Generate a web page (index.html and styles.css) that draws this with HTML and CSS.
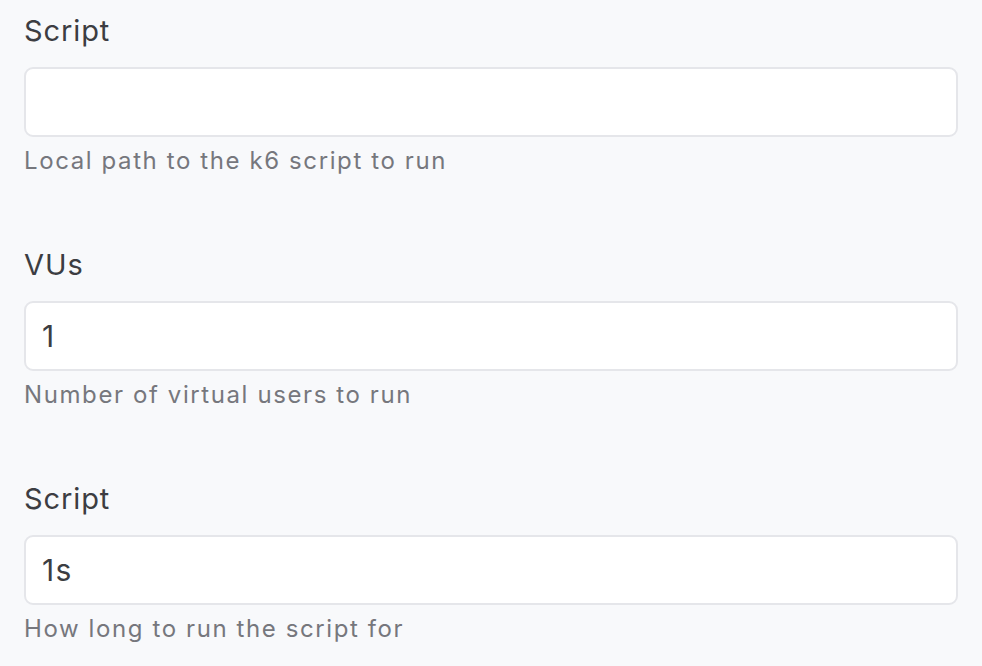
FILE: index.html
```html
<!DOCTYPE html>
<html>
<head>
<meta charset="utf-8">
<link rel="stylesheet" href="styles.css">
</head>
<body>
<form class="form">
  <div class="field">
    <label class="label">Script</label>
    <input class="input" type="text" value="">
    <div class="help">Local path to the k6 script to run</div>
  </div>
  <div class="field">
    <label class="label">VUs</label>
    <input class="input" type="text" value="1">
    <div class="help">Number of virtual users to run</div>
  </div>
  <div class="field">
    <label class="label">Script</label>
    <input class="input" type="text" value="1s">
    <div class="help">How long to run the script for</div>
  </div>
</form>
</body>
</html>
```
FILE: styles.css
```css
html, body {
  margin: 0;
  padding: 0;
  background: #f8f9fb;
}
body {
  font-family: Inter, "Liberation Sans", sans-serif;
  color: #3a3b40;
}
.form {
  display: flex;
  flex-direction: column;
  padding: 13px 24px 0 24px;
  gap: 70px;
}
.field {
  display: flex;
  flex-direction: column;
}
.label {
  font-size: 29px;
  line-height: 36px;
  letter-spacing: 0.9px;
  color: #3c3d42;
  margin-bottom: 18px;
}
.input {
  box-sizing: border-box;
  height: 70px;
  width: 100%;
  border: 2px solid #e5e6ea;
  border-radius: 9px;
  background: #fff;
  padding: 0 16px;
  font-family: Inter, "Liberation Sans", sans-serif;
  font-size: 30px;
  letter-spacing: 1.3px;
  color: #3c3d42;
  outline: none;
}
.help {
  margin-top: 8px;
  font-size: 24px;
  line-height: 32px;
  letter-spacing: 1.6px;
  color: #76777d;
}
```
